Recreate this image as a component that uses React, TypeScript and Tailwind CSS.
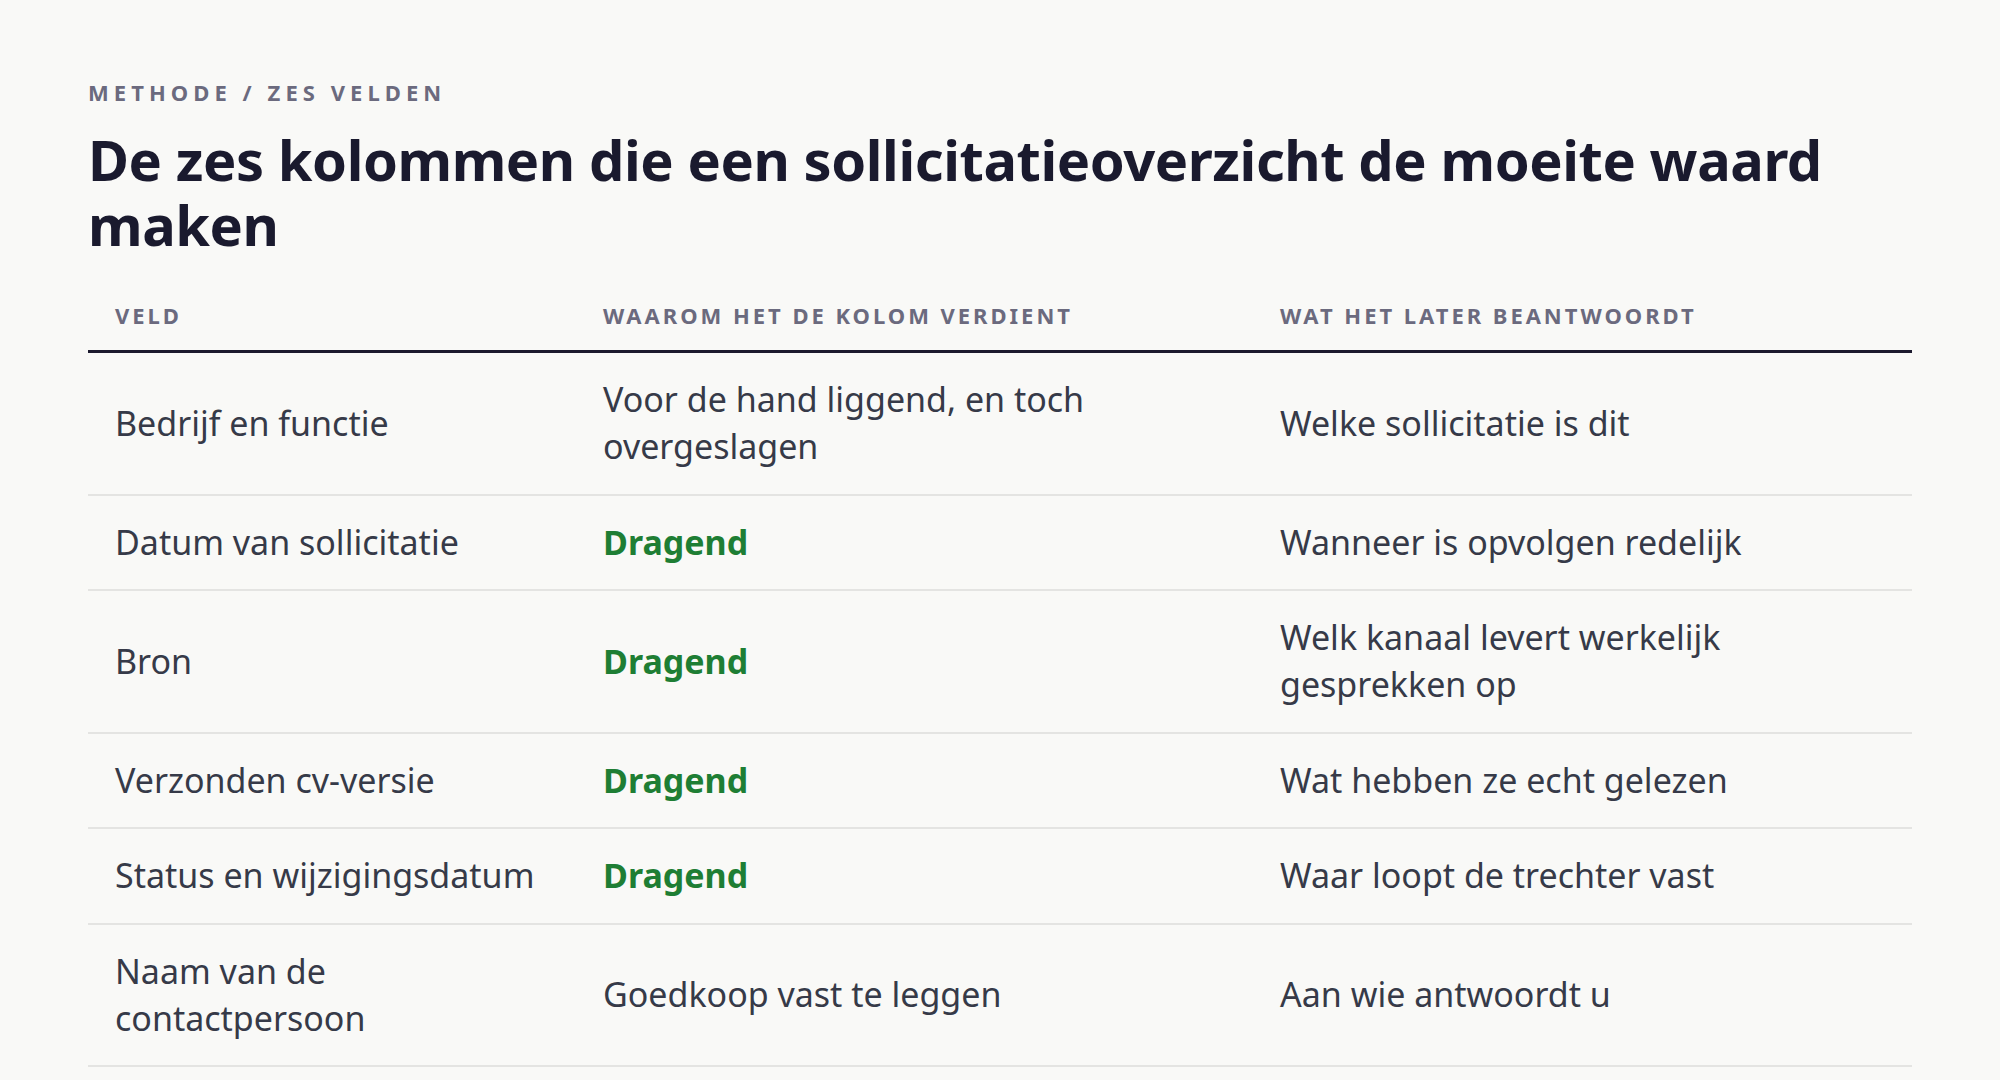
import React from "react";

const rows: { field: string; why: string; strong?: boolean; answer: string }[] = [
  { field: "Bedrijf en functie", why: "Voor de hand liggend, en toch overgeslagen", answer: "Welke sollicitatie is dit" },
  { field: "Datum van sollicitatie", why: "Dragend", strong: true, answer: "Wanneer is opvolgen redelijk" },
  { field: "Bron", why: "Dragend", strong: true, answer: "Welk kanaal levert werkelijk gesprekken op" },
  { field: "Verzonden cv-versie", why: "Dragend", strong: true, answer: "Wat hebben ze echt gelezen" },
  { field: "Status en wijzigingsdatum", why: "Dragend", strong: true, answer: "Waar loopt de trechter vast" },
  { field: "Naam van de contactpersoon", why: "Goedkoop vast te leggen", answer: "Aan wie antwoordt u" },
];

export default function App() {
  return (
    <div className="min-h-screen bg-[#f9f9f7] px-[88px] pt-[78px] font-['Noto_Sans',sans-serif]">
      <div className="text-[22px] leading-[28px] font-bold tracking-[0.23em] text-[#6b6a7e] uppercase">
        Methode / zes velden
      </div>
      <h1 className="mt-[21px] text-[56px] leading-[65px] font-bold text-[#1a1a2e] tracking-[-0.0075em]">
        De zes kolommen die een sollicitatieoverzicht de moeite waard maken
      </h1>
      <div className="mt-[44px]">
        <div className="grid grid-cols-[488px_677px_1fr] border-b-[3px] border-[#1c1a2e] pb-[21px] text-[22px] leading-[28px] font-bold tracking-[0.135em] text-[#6b6a7e] uppercase">
          <div className="px-[27px]">Veld</div>
          <div className="px-[27px]">Waarom het de kolom verdient</div>
          <div className="px-[27px]">Wat het later beantwoordt</div>
        </div>
        {rows.map((r) => (
          <div
            key={r.field}
            className="grid grid-cols-[488px_677px_1fr] items-center border-b-2 border-[#e4e4e2] py-[23.25px] text-[34px] leading-[47px] text-[#363a48]"
          >
            <div className="px-[27px]">{r.field}</div>
            <div className={r.strong ? "px-[27px] font-bold text-[#1e7e34]" : "px-[27px]"}>{r.why}</div>
            <div className="px-[27px]">{r.answer}</div>
          </div>
        ))}
      </div>
    </div>
  );
}
